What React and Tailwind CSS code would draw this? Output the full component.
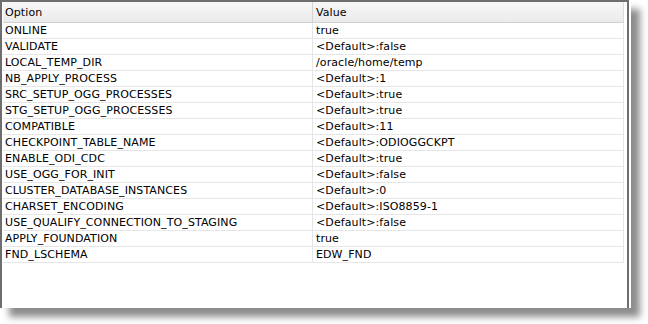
const rows = [
  ["ONLINE", "true"],
  ["VALIDATE", "<Default>:false"],
  ["LOCAL_TEMP_DIR", "/oracle/home/temp"],
  ["NB_APPLY_PROCESS", "<Default>:1"],
  ["SRC_SETUP_OGG_PROCESSES", "<Default>:true"],
  ["STG_SETUP_OGG_PROCESSES", "<Default>:true"],
  ["COMPATIBLE", "<Default>:11"],
  ["CHECKPOINT_TABLE_NAME", "<Default>:ODIOGGCKPT"],
  ["ENABLE_ODI_CDC", "<Default>:true"],
  ["USE_OGG_FOR_INIT", "<Default>:false"],
  ["CLUSTER_DATABASE_INSTANCES", "<Default>:0"],
  ["CHARSET_ENCODING", "<Default>:ISO8859-1"],
  ["USE_QUALIFY_CONNECTION_TO_STAGING", "<Default>:false"],
  ["APPLY_FOUNDATION", "true"],
  ["FND_LSCHEMA", "EDW_FND"],
];

export default function App() {
  return (
    <div className="w-[648px] h-[324px] bg-white overflow-hidden" style={{ fontFamily: "'DejaVu Sans', sans-serif" }}>
      <div className="w-[631px] h-[308px] bg-white pr-[2px] shadow-[9px_9px_7px_rgba(0,0,0,0.45)]">
        <div className="h-full border-l-2 border-t-2 border-r-2 border-[#6e6e6e] pl-px pr-[3px] text-[11px] text-black tracking-[0.1px]">
          {/* 헤더 */}
          <div className="grid grid-cols-[310px_1fr] h-[21px] bg-gradient-to-b from-[#f7f7f7] to-[#ebebeb] border-b border-[#d0d0d0] border-r border-r-[#dcdcdc]">
            <div className="pl-[2px] leading-[21px] border-r border-[#d4d4d4]">Option</div>
            <div className="pl-[3px] leading-[21px]">Value</div>
          </div>
          {rows.map(([opt, val]) => (
            <div key={opt} className="grid grid-cols-[310px_1fr] h-4 border-b border-[#e6e6e6] border-r border-r-[#e6e6e6]">
              <div className="pl-[2px] leading-[15px] border-r border-[#e6e6e6]">{opt}</div>
              <div className="pl-[3px] leading-[15px]">{val}</div>
            </div>
          ))}
        </div>
      </div>
    </div>
  );
}
